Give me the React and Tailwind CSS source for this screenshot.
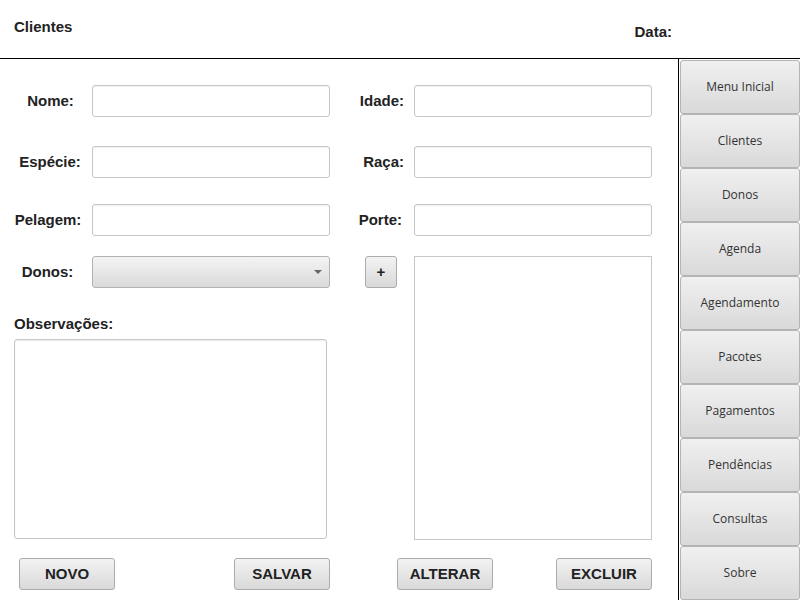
import React from 'react'

const menu = ['Menu Inicial', 'Clientes', 'Donos', 'Agenda', 'Agendamento', 'Pacotes', 'Pagamentos', 'Pendências', 'Consultas', 'Sobre']

function Field() {
    return (
        <div className="w-[238px] h-[32px] bg-white border border-[#c6c6c6] rounded-[3px] shadow-[inset_0_1px_1px_rgba(0,0,0,0.06)]" />
    )
}

function Btn({ children, className = 'w-[96px]' }) {
    return (
        <button className={"h-[32px] border border-[#ababab] rounded-[3px] bg-gradient-to-b from-[#f3f3f3] to-[#d9d9d9] text-[15px] font-bold text-[#222] " + className}>
            {children}
        </button>
    )
}

export default function App() {
    const label = "text-[15px] font-bold text-[#222]"

    return (
        <div className="w-[800px] h-[600px] bg-white flex flex-col overflow-hidden font-['Liberation_Sans',Arial,sans-serif]">
            {/* header */}
            <div className="h-[59px] border-b border-black flex justify-between shrink-0">
                <h1 className={"pl-[14px] pt-[16px] " + label}>Clientes</h1>
                <span className={"pr-[128px] pt-[21px] " + label}>Data:</span>
            </div>

            <div className="flex flex-1 min-h-0">
                <div className="flex-1 flex flex-col">
                    <div className="flex items-center mt-[26px]">
                        <span className={"w-[92px] text-center pl-[9px] " + label}>Nome:</span>
                        <Field />
                        <span className={"w-[84px] text-right pr-[10px] " + label}>Idade:</span>
                        <Field />
                    </div>
                    <div className="flex items-center mt-[29px]">
                        <span className={"w-[92px] text-center pl-[8px] " + label}>Espécie:</span>
                        <Field />
                        <span className={"w-[84px] text-right pr-[10px] " + label}>Raça:</span>
                        <Field />
                    </div>
                    <div className="flex items-center mt-[26px]">
                        <span className={"w-[92px] text-center pl-[4px] " + label}>Pelagem:</span>
                        <Field />
                        <span className={"w-[84px] text-right pr-[12px] " + label}>Porte:</span>
                        <Field />
                    </div>
                    <div className="flex mt-[20px]">
                        <div className="flex flex-col">
                            <div className="flex items-center">
                                <span className={"w-[92px] text-center pl-[3px] " + label}>Donos:</span>
                                <div className="w-[238px] h-[32px] border border-[#b3b3b3] rounded-[3px] bg-gradient-to-b from-[#f4f4f4] to-[#dadada] flex items-center justify-end pr-[7px]">
                                    <svg width="8" height="4" viewBox="0 0 8 4"><path d="M0 0h8L4 4z" fill="#666" /></svg>
                                </div>
                            </div>
                            <span className={"pl-[14px] mt-[25px] " + label}>Observações:</span>
                            <div className="ml-[14px] mt-[3px] w-[313px] h-[200px] border border-[#c6c6c6] rounded-[3px] shadow-[inset_0_1px_1px_rgba(0,0,0,0.08)]" />
                        </div>
                        <div className="w-[84px] pl-[35px]">
                            <Btn className="w-[32px]">+</Btn>
                        </div>
                        <div className="w-[238px] h-[284px] border border-[#c6c6c6]" />
                    </div>
                    <div className="flex mt-[18px]">
                        <Btn className="w-[96px] ml-[19px]">NOVO</Btn>
                        <Btn className="w-[96px] ml-[119px]">SALVAR</Btn>
                        <Btn className="w-[96px] ml-[67px]">ALTERAR</Btn>
                        <Btn className="w-[96px] ml-[63px]">EXCLUIR</Btn>
                    </div>
                </div>

                {/* side menu */}
                <div className="w-[122px] border-l border-black flex flex-col pl-[1px] pt-[1px]">
                    {menu.map(m => (
                        <button key={m} className="h-[54px] shrink-0 w-full border border-[#b4b4b4] rounded-[3px] bg-gradient-to-b from-[#f0f0f0] to-[#d9d9d9] text-[12px] text-[#333] font-['Open_Sans',sans-serif]">
                            {m}
                        </button>
                    ))}
                </div>
            </div>
        </div>
    )
}
